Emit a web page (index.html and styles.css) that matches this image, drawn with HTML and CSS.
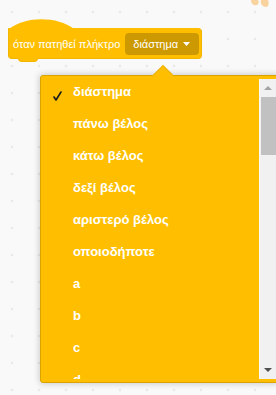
FILE: index.html
```html
<!DOCTYPE html>
<html lang="el">
<head>
  <meta charset="UTF-8">
  <meta name="viewport" content="width=device-width, initial-scale=1.0">
  <title>Scratch</title>
  <link rel="stylesheet" href="styles.css">
</head>
<body>
  <div class="workspace">
    <!-- faded sprite edge in the corner -->
    <svg class="sprite-peek" width="20" height="10" viewBox="0 0 20 10">
      <path d="M1 0 C1 4 4 6 7 5 C9 4 9 1 8 0 Z" fill="#f8d39d"/>
      <path d="M11 0 C10 3 12 7 16 7 C19 7 19 3 18 0 Z" fill="#f8d39d"/>
    </svg>

    <div class="hat-block">
      <svg class="hat-cap" width="67" height="10" viewBox="0 0 96 16" preserveAspectRatio="none">
        <path d="M0 17 C25 -5 71 -5 96 17 Z" fill="#ffbf00"/>
      </svg>
      <span class="block-label">όταν πατηθεί πλήκτρο</span>
      <span class="block-dropdown">
        διάστημα
        <svg class="caret" width="7" height="4" viewBox="0 0 7 4"><path d="M0 0 H7 L3.5 4 Z" fill="#fff"/></svg>
      </span>
    </div>

    <div class="menu">
      <div class="menu-body">
        <ul class="menu-list">
          <li class="menu-item">
            <span class="check">
              <svg width="9" height="10" viewBox="0 0 9 10"><path d="M1 6 L3 9 L8 1" fill="none" stroke="#1a1a1a" stroke-width="1.6" stroke-linecap="round" stroke-linejoin="round"/></svg>
            </span>
            διάστημα
          </li>
          <li class="menu-item"><span class="check"></span>πάνω βέλος</li>
          <li class="menu-item"><span class="check"></span>κάτω βέλος</li>
          <li class="menu-item"><span class="check"></span>δεξί βέλος</li>
          <li class="menu-item"><span class="check"></span>αριστερό βέλος</li>
          <li class="menu-item"><span class="check"></span>οποιοδήποτε</li>
          <li class="menu-item"><span class="check"></span>a</li>
          <li class="menu-item"><span class="check"></span>b</li>
          <li class="menu-item"><span class="check"></span>c</li>
          <li class="menu-item"><span class="check"></span>d</li>
        </ul>
        <div class="scrollbar">
          <span class="arrow-up"></span>
          <span class="thumb"></span>
          <span class="spacer"></span>
          <span class="arrow-down"></span>
        </div>
      </div>
    </div>
  </div>
</body>
</html>
```

FILE: styles.css
```css
html, body {
  margin: 0;
  padding: 0;
  height: 100%;
  overflow: hidden;
}
body {
  font-family: "Liberation Sans", Arial, sans-serif;
  background-color: #f9f9f9;
}
.workspace {
  position: relative;
  height: 100%;
  padding: 28px 0 0 8px;
  box-sizing: border-box;
  background-image: radial-gradient(circle, #d6d6d6 0.7px, transparent 1.2px);
  background-size: 27px 27px;
  background-position: -1.5px -1.5px;
}
.sprite-peek {
  position: absolute;
  top: 0;
  right: 6px;
}

/* hat block */
.hat-block {
  position: relative;
  display: inline-flex;
  align-items: center;
  gap: 5px;
  width: 194px;
  height: 31px;
  padding: 0 4px;
  box-sizing: border-box;
  background-color: #ffbf00;
  border: 1px solid #f2b500;
  border-top-color: #ffbf00;
  border-radius: 0 4px 4px 4px;
  color: white;
}
.hat-cap {
  position: absolute;
  left: -1px;
  top: -10px;
  display: block;
}
.hat-block::after {
  content: "";
  position: absolute;
  left: 9px;
  bottom: -4px;
  width: 20px;
  height: 4px;
  background-color: #ffbf00;
  border: 1px solid #f2b500;
  border-top: none;
  border-radius: 0 0 4px 4px;
  box-sizing: border-box;
}
.block-label {
  position: relative;
  font-size: 11px;
  white-space: nowrap;
  padding-top: 1px;
}
.block-dropdown {
  position: relative;
  display: inline-flex;
  align-items: center;
  gap: 5px;
  width: 74px;
  height: 22px;
  padding: 0 9px 0 8px;
  box-sizing: border-box;
  background-color: #cc9900;
  border-radius: 4px;
  font-size: 11px;
  white-space: nowrap;
}

/* dropdown menu */
.menu {
  position: absolute;
  left: 40px;
  top: 75px;
  width: 240px;
  height: 308px;
  padding: 3px 0;
  box-sizing: border-box;
  background-color: #ffbf00;
  border: 1px solid #d9a300;
  border-radius: 3px;
  box-shadow: 0 0 6px 1px rgba(0, 0, 0, 0.18);
}
.menu::before {
  content: "";
  position: absolute;
  left: 114px;
  top: -8px;
  width: 15px;
  height: 15px;
  background-color: #ffbf00;
  border-left: 1px solid rgba(0, 0, 0, 0.08);
  border-top: 1px solid rgba(0, 0, 0, 0.08);
  transform: rotate(45deg);
}
.menu-body {
  position: relative;
  display: flex;
  height: 300px;
  padding-right: 3px;
}
.menu-list {
  flex: 1;
  margin: 0;
  padding: 0;
  list-style: none;
  overflow: hidden;
}
.menu-item {
  display: flex;
  height: 32px;
  padding: 1px 0 0 12px;
  box-sizing: border-box;
  line-height: 24px;
  font-size: 13px;
  font-weight: bold;
  color: white;
  white-space: nowrap;
}
.check {
  display: inline-flex;
  align-items: center;
  width: 20px;
  flex-shrink: 0;
}

/* scrollbar */
.scrollbar {
  display: flex;
  flex-direction: column;
  align-items: flex-end;
  width: 17px;
  background-color: #f1f1f1;
  border-left: 1px solid #fafafa;
  box-sizing: border-box;
}
.arrow-up,
.arrow-down {
  align-self: center;
  width: 0;
  height: 0;
  border-left: 4px solid transparent;
  border-right: 4px solid transparent;
}
.arrow-up {
  margin-top: 7px;
  margin-bottom: 7px;
  border-bottom: 4px solid #a3a3a3;
}
.thumb {
  width: 15px;
  height: 58px;
  background-color: #c1c1c1;
}
.spacer {
  flex: 1;
}
.arrow-down {
  margin-bottom: 7px;
  border-top: 4px solid #505050;
}
```
